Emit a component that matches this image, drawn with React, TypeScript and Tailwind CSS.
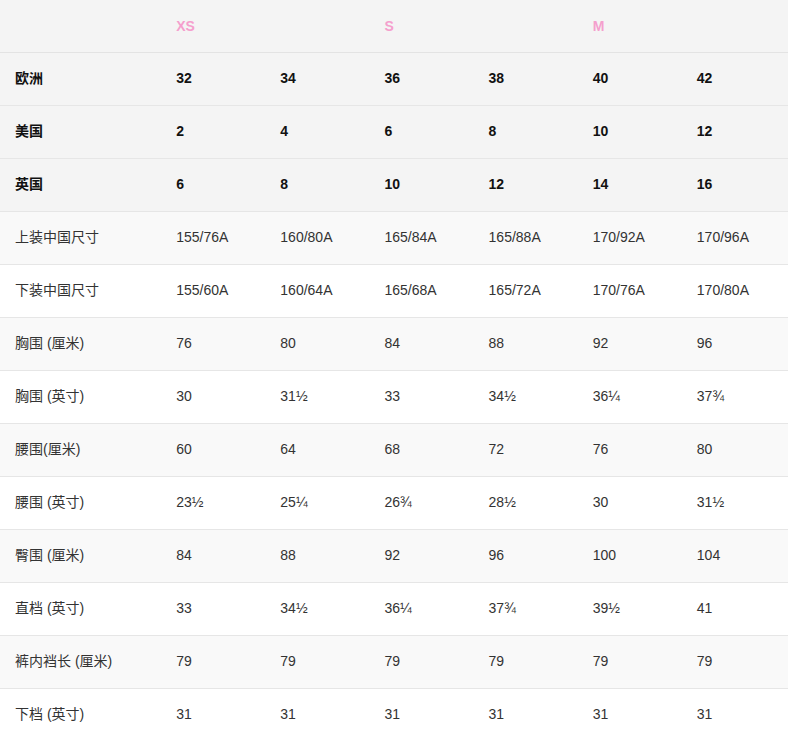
const sizes = ["XS", "", "S", "", "M", ""];

const rows: { label: string; values: string[]; bold?: boolean }[] = [
  { label: "欧洲", values: ["32", "34", "36", "38", "40", "42"], bold: true },
  { label: "美国", values: ["2", "4", "6", "8", "10", "12"], bold: true },
  { label: "英国", values: ["6", "8", "10", "12", "14", "16"], bold: true },
  { label: "上装中国尺寸", values: ["155/76A", "160/80A", "165/84A", "165/88A", "170/92A", "170/96A"] },
  { label: "下装中国尺寸", values: ["155/60A", "160/64A", "165/68A", "165/72A", "170/76A", "170/80A"] },
  { label: "胸围 (厘米)", values: ["76", "80", "84", "88", "92", "96"] },
  { label: "胸围 (英寸)", values: ["30", "31½", "33", "34½", "36¼", "37¾"] },
  { label: "腰围(厘米)", values: ["60", "64", "68", "72", "76", "80"] },
  { label: "腰围 (英寸)", values: ["23½", "25¼", "26¾", "28½", "30", "31½"] },
  { label: "臀围 (厘米)", values: ["84", "88", "92", "96", "100", "104"] },
  { label: "直档 (英寸)", values: ["33", "34½", "36¼", "37¾", "39½", "41"] },
  { label: "裤内裆长 (厘米)", values: ["79", "79", "79", "79", "79", "79"] },
  { label: "下档 (英寸)", values: ["31", "31", "31", "31", "31", "31"] },
];

// size chart table
export default function App() {
  return (
    <div className="bg-white min-h-screen font-['Liberation_Sans','Noto_Sans_CJK_SC',sans-serif] text-[14px]">
      <table className="w-[788px] table-fixed border-collapse">
        <colgroup>
          <col className="w-[161px]" />
          {sizes.map((_, i) => (
            <col key={i} className={i === 5 ? "w-[106px]" : "w-[104px]"} />
          ))}
        </colgroup>
        <thead>
          <tr className="h-[52px] bg-[#f4f4f4] border-b border-[#e3e3e3]">
            <th></th>
            {sizes.map((s, i) => (
              <th key={i} className="pl-[15px] pt-[1px] text-left font-bold text-[#f59fcd] align-middle">
                {s}
              </th>
            ))}
          </tr>
        </thead>
        <tbody>
          {rows.map((row, idx) => {
            const bg = row.bold
              ? "bg-[#f4f4f4]"
              : (idx - 3) % 2 === 0
              ? "bg-[#f9f9f9]"
              : "bg-white";
            const txt = row.bold ? "font-bold text-[#111]" : "text-[#333]";
            return (
              <tr key={row.label} className={`h-[53px] border-b border-[#e6e6e6] ${bg}`}>
                <td className={`pl-[15px] ${txt}`}>{row.label}</td>
                {row.values.map((v, i) => (
                  <td key={i} className={`pl-[15px] ${txt}`}>
                    {v}
                  </td>
                ))}
              </tr>
            );
          })}
        </tbody>
      </table>
    </div>
  );
}
